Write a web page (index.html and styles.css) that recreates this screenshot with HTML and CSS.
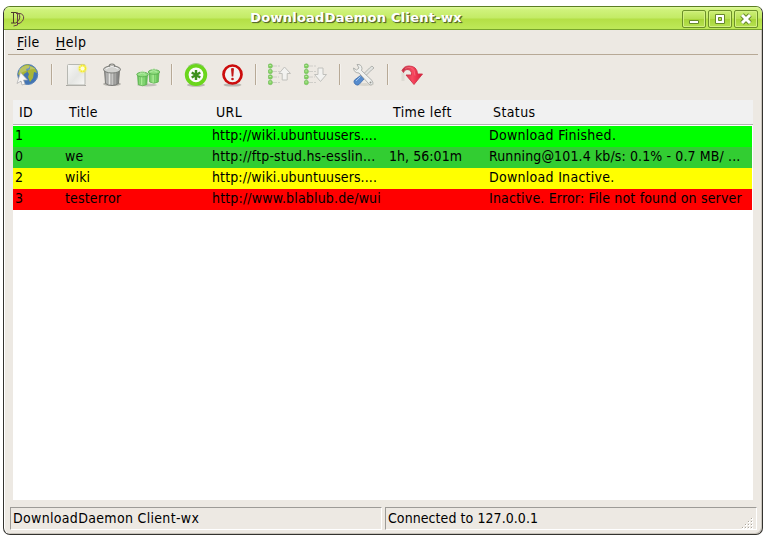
FILE: index.html
```
<!DOCTYPE html>
<html lang="en">
<head>
<meta charset="utf-8">
<title>DownloadDaemon Client-wx</title>
<link rel="stylesheet" href="styles.css">
</head>
<body>
<div class="window">
  <header class="titlebar">
    <svg class="logo" width="16" height="16" viewBox="0 0 16 16" fill="none" stroke="#4c3a2c">
      <path d="M1 1.500h5.500c4.500 1 4.500 8-1 10.500H1M3.500 2v10" stroke-width="1"/>
      <path d="M6 2.500h4c5.500 1 4.500 8-1 10H7M7.500 3v11l-4 1" stroke="#674047" stroke-width="1"/>
    </svg>
    <h1 class="title">DownloadDaemon Client-wx</h1>
    <div class="controls">
      <button class="control"><svg width="24" height="18"><path d="M7.500 10.500h9v3h-9z" fill="#fff" stroke="#67892a"/></svg></button>
      <button class="control"><svg width="24" height="18"><path d="M7.500 4.500h9v9h-9z" fill="#fff" stroke="#67892a"/><path d="M10.500 7.500h3v3h-3z" fill="#b5de53" stroke="#67892a"/></svg></button>
      <button class="control"><svg width="24" height="18"><path d="M8 5l8 8M16 5l-8 8" stroke="#67892a" stroke-width="5"/><path d="M8 5l8 8M16 5l-8 8" stroke="#fff" stroke-width="3"/></svg></button>
    </div>
  </header>
  <nav class="menubar"><span class="menu"><u>F</u>ile</span><span class="menu"><u>H</u>elp</span></nav>
  <div class="toolbar">
    <div class="tool"><svg viewBox="0 0 24 24">
      <circle cx="11.700" cy="11.500" r="10" fill="#4274b4" stroke="#5580b4"/>
      <path d="M4 6q5-6 10-4l-1 3-3 1 1 3-3 2-2 4-4-4zM14 3q6 1 7 7l-3-1-1 6-3 4-2-5 1-3-2-3 3-2z" fill="#a9b536"/>
      <path d="M3 6q8-7 17 0-8 0-17 5z" fill="#fff" opacity=".22"/>
      <path d="M4.500 9.500l-3.500 11 4-2.500 1 4 3-1-1.500-4h4z" fill="#f8f8f8" stroke="#aaa" stroke-width=".7"/>
    </svg></div>
    <div class="sep"></div>
    <div class="tool"><svg viewBox="0 0 24 24">
      <defs><linearGradient id="paper" x2="1" y2="1"><stop stop-color="#f8f8f6"/><stop offset=".55" stop-color="#e5e6e3"/><stop offset="1" stop-color="#f8f8f6"/></linearGradient>
      <radialGradient id="glow"><stop stop-color="#fff"/><stop offset=".3" stop-color="#fff96a"/><stop offset="1" stop-color="#fff434" stop-opacity="0"/></radialGradient></defs>
      <path d="M2 22.500h20" stroke="#aaa8a2"/>
      <rect x="3.500" y="1.500" width="17.500" height="20.500" rx="1" fill="url(#paper)" stroke="#b7b8b2"/>
      <circle cx="18.500" cy="5.500" r="5.500" fill="url(#glow)"/><circle cx="18.500" cy="5.500" r="3" fill="none" stroke="#f5ec28" stroke-width="1.500" stroke-dasharray="1.600 .8"/><circle cx="18.500" cy="5.500" r="2" fill="#fffddb"/>
    </svg></div>
    <div class="tool"><svg viewBox="0 0 24 24">
      <defs><linearGradient id="metal"><stop stop-color="#888"/><stop offset=".3" stop-color="#e8e8e5"/><stop offset=".65" stop-color="#b5b5b2"/><stop offset="1" stop-color="#777"/></linearGradient></defs>
      <ellipse cx="12" cy="21" rx="9" ry="2" fill="#b5b3ad"/>
      <path d="M4.500 7h15l-1 13.500q-6.500 4-13 0z" fill="url(#metal)" stroke="#7b7b77"/>
      <path d="M8 10v11M11 10v12M14 10v12M17 10v11" stroke="#777" opacity=".65"/>
      <ellipse cx="12" cy="6.500" rx="8.500" ry="3.500" fill="#d2d2cf" stroke="#7b7c78"/>
      <path d="M6 6q6-5 12 0" stroke="#f5f5f5" fill="none"/><path d="M9 4q0-3 3-3t3 3" fill="none" stroke="#7b7c78" stroke-width="1.200"/>
    </svg></div>
    <div class="tool"><svg viewBox="0 0 24 24">
      <defs><linearGradient id="greencan"><stop stop-color="#52b547"/><stop offset=".35" stop-color="#b0f09b"/><stop offset="1" stop-color="#57ba4a"/></linearGradient>
      <g id="can"><path d="M1 4h10l-.7 10q-4.500 2.500-8.600 0z" fill="url(#greencan)" stroke="#5aae4e" stroke-width=".7"/><path d="M4 6v8M6.500 6v9M9 6v8" stroke="#65c059" stroke-width=".6"/><ellipse cx="6" cy="4" rx="5.700" ry="2.300" fill="#91de80" stroke="#54a84a" stroke-width=".8"/><path d="M4 2q2-3 4 0M2 4q4-3 7 0" fill="none" stroke="#b9edab" stroke-width=".8"/></g></defs>
      <ellipse cx="11" cy="22" rx="10" ry="1.500" fill="#c2c0ba"/><use href="#can" x="12" y="5"/><use href="#can" x=".5" y="7.500"/>
    </svg></div>
    <div class="sep"></div>
    <div class="tool"><svg viewBox="0 0 24 24">
      <ellipse cx="12" cy="22" rx="9" ry="1.800" fill="#b9b7b1"/>
      <circle cx="12" cy="11.800" r="9.300" fill="#fbfcf9" stroke="#6bd61c" stroke-width="3.800"/><path d="M4 3.500q8-6 16 0" stroke="#a5c994" stroke-width="1" fill="none"/>
      <path d="M12 7v10M7.700 9.500l8.600 5M7.700 14.500l8.600-5" stroke="#3d901d" stroke-width="2.400"/>
    </svg></div>
    <div class="tool"><svg viewBox="0 0 24 24">
      <ellipse cx="12.500" cy="22" rx="9" ry="1.600" fill="#b9b7b1"/>
      <circle cx="12.500" cy="11.500" r="9" fill="#f2f2f1" stroke="#cc0c0c" stroke-width="2.700"/>
      <path d="M11 5.500q1.500-1 3 0l-.7 8h-1.600z" fill="#c41818"/><circle cx="12.500" cy="16" r="1.300" fill="#c41818"/>
    </svg></div>
    <div class="sep"></div>
    <div class="tool"><svg viewBox="0 0 24 24">
      <defs><g id="bullets"><path d="M5 3h7M5 8.500h7M5 14h6M5 19.500h7" stroke="#cfcec9" stroke-width="1.200" stroke-dasharray="4 1"/><g fill="#82d260" stroke="#76b85f" stroke-width=".6"><circle cx="2.300" cy="3" r="2.200"/><circle cx="2.300" cy="8.500" r="2.200"/><circle cx="2.300" cy="14" r="2.200"/><circle cx="2.300" cy="19.500" r="2.200"/></g><path d="M1.200 2.500h2M1.200 8h2M1.200 13.500h2M1.200 19h2" stroke="#b9e8a0"/></g></defs>
      <use href="#bullets"/><path d="M16.500 4l6 6.500h-3.300v6.500h-5v-6.500h-3.200z" fill="#f2f2f0" stroke="#c0c0bc"/>
    </svg></div>
    <div class="tool"><svg viewBox="0 0 24 24"><use href="#bullets"/><path d="M14 5h5v6.500h3.500l-6 7-6-7h3.500z" fill="#f2f2f0" stroke="#c0c0bc"/></svg></div>
    <div class="sep"></div>
    <div class="tool"><svg viewBox="0 0 24 24">
      <ellipse cx="13" cy="21.500" rx="9" ry="1.500" fill="#d9d6ce"/>
      <path d="M20 3l2 2-2.500 2-9 9-2-2 9-9z" fill="#e2e4e1" stroke="#a5a7a3" stroke-width=".8"/>
      <path d="M8.500 12.500l3.500 3.500-5 5.500q-2 1.500-4-.5t-.5-4z" fill="#568cce" stroke="#416fac" stroke-width=".8"/><path d="M4 18l4.500-4.500" stroke="#a6c6ec"/>
      <path d="M5 1.500q4.500-.5 5 4l-.5 2 10.500 10q2.500 3-.5 4.500-1.500.5-3-1.500L7 10Q2 10 1.500 5l3 2L7 5z" fill="#f0f1ef" stroke="#a0a29e" stroke-width=".8"/><circle cx="18.500" cy="19.500" r="1" fill="#92938f"/>
    </svg></div>
    <div class="sep"></div>
    <div class="tool"><svg viewBox="0 0 24 24">
      <defs><linearGradient id="redarrow" x2="1"><stop stop-color="#b82f43"/><stop offset=".5" stop-color="#f84960"/><stop offset="1" stop-color="#d91937"/></linearGradient></defs>
      <path d="M3 9v9" stroke="#dedbd4" stroke-width="3"/>
      <path d="M2 7.500Q4 3 9 3q8 0 8.500 8h5L14 21.500 6 12h5.500Q12 6.500 7 6.500q-2.500 0-3.500 3z" fill="url(#redarrow)" stroke="#cf334a" stroke-width=".9"/><path d="M5 5.500q6-3 9 2l1 5" fill="none" stroke="#f87584" stroke-width=".7"/>
    </svg></div>
  </div>
  <main class="list">
    <div class="row head"><span>ID</span><span>Title</span><span>URL</span><span>Time left</span><span>Status</span></div>
    <div class="row finished"><span>1</span><span></span><span class="url">http://wiki.ubuntuusers....</span><span></span><span class="status">Download Finished.</span></div>
    <div class="row running"><span>0</span><span>we</span><span>http://ftp-stud.hs-esslin...</span><span class="time">1h, 56:01m</span><span class="progress">Running@101.4 kb/s: 0.1% - 0.7 MB/ ...</span></div>
    <div class="row waiting"><span>2</span><span>wiki</span><span class="url">http://wiki.ubuntuusers....</span><span></span><span class="status">Download Inactive.</span></div>
    <div class="row error"><span>3</span><span>testerror</span><span>http://www.blablub.de/wui</span><span></span><span>Inactive. Error: File not found on server</span></div>
  </main>
  <footer class="statusbar">
    <div class="panel app">DownloadDaemon Client-wx</div>
    <div class="panel">Connected to 127.0.0.1
      <svg class="grip" width="12" height="12"><path d="M9 1h2v2H9zM6 4h2v2H6zM9 4h2v2H9zM3 7h2v2H3zM6 7h2v2H6zM9 7h2v2H9zM0 10h2v2H0zM3 10h2v2H3zM6 10h2v2H6zM9 10h2v2H9z" fill="#fff"/><path d="M9 1h1v1H9zM6 4h1v1H6zM9 4h1v1H9zM3 7h1v1H3zM6 7h1v1H6zM9 7h1v1H9zM0 10h1v1H0zM3 10h1v1H3zM6 10h1v1H6zM9 10h1v1H9z" fill="#aca79d"/></svg>
    </div>
  </footer>
</div>
</body>
</html>
```
FILE: styles.css
```
* { box-sizing: border-box; }
body {
  margin: 0;
  padding: 6px 5px 5px 3px;
  height: 540px;
  overflow: hidden;
  background: #fff;
  color: #000;
  font: 14px/20px "DejaVu Sans Condensed", "DejaVu Sans", sans-serif;
}
.window {
  width: 760px;
  height: 529px;
  display: flex;
  flex-direction: column;
  background: #ede9e3;
  border: 1px solid #34332f;
  border-top-color: #5b7e23;
  border-radius: 7px;
  overflow: hidden;
  box-shadow: inset 1px 0 #fff, inset -1px -1px #c9c4bc;
}
.titlebar {
  height: 23px;
  flex: none;
  display: flex;
  align-items: center;
  padding: 0 4px 0 6px;
  background: linear-gradient(#e0fa9d 0, #cff27b 3px, #c3eb65 11px, #b4df45 12px, #bde857 21px, #bde857 22px, #78a42d 22px);
}
.logo { margin-top: 1px; }
.title {
  flex: 1;
  margin: 0 0 2px 4px;
  text-align: center;
  font: bold 13px/18px "DejaVu Sans", sans-serif;
  letter-spacing: .25px;
  color: #fff;
  text-shadow: 1px 1px 0 #5a6d30, 1px 1px 1px #435b18;
}
.controls { display: flex; gap: 2px; }
.control {
  width: 24px;
  height: 18px;
  padding: 0;
  border: 1px solid #6c9029;
  border-radius: 2px;
  background: linear-gradient(#cdf077, #b6df52 50%, #a7d438 50%, #b6e251);
  box-shadow: inset 0 0 0 1px #d3f082;
}
.control svg { display: block; margin: -1px; }
.menubar {
  height: 25px;
  flex: none;
  display: flex;
  gap: 16px;
  margin: 0 4px;
  padding: 2px 9px 0;
  border-bottom: 1px solid #b7a996;
}
.menu { letter-spacing: .45px; }
.menu u { text-underline-offset: 2px; }
.toolbar { height: 45px; flex: none; display: flex; padding: 8px 6px 0; }
.tool { width: 36px; padding: 0 6px; }
.tool svg { display: block; width: 24px; height: 24px; }
.sep { width: 12px; padding: 1px 0 0 5px; }
.sep::before {
  content: "";
  display: block;
  width: 2px;
  height: 21px;
  background: linear-gradient(90deg, #b7a996 50%, #f5f2ee 50%);
}
.list { width: 740px; height: 400px; flex: none; margin-left: 9px; background: #fff; }
.row {
  display: grid;
  grid-template-columns: 50px 147px 177px 100px 1fr;
  width: 739px;
  height: 21px;
  padding-left: 2px;
  line-height: 19px;
  letter-spacing: .17px;
  white-space: nowrap;
}
.url { letter-spacing: .11px; }
.status { letter-spacing: .28px; }
.time { letter-spacing: .05px; }
.progress { letter-spacing: .12px; }
.head {
  width: 740px;
  height: 25px;
  margin-bottom: 1px;
  padding: 2px 0 0 6px;
  line-height: 20px;
  letter-spacing: .4px;
  background: #f1f1f1;
  border-bottom: 1px solid #b4b3b1;
}
.finished { background: #0f0; }
.running { background: #32cd32; }
.waiting { background: #ff0; }
.error { background: #f00; }
.statusbar { display: flex; gap: 3px; margin: 7px 5px 0 6px; }
.panel {
  position: relative;
  width: 372px;
  height: 23px;
  padding: 0 2px;
  border: 1px solid;
  border-color: #9d9b97 #fff #fff #9d9b97;
  letter-spacing: .07px;
}
.app { letter-spacing: .32px; }
.grip { position: absolute; right: 2px; bottom: 0; }
```
